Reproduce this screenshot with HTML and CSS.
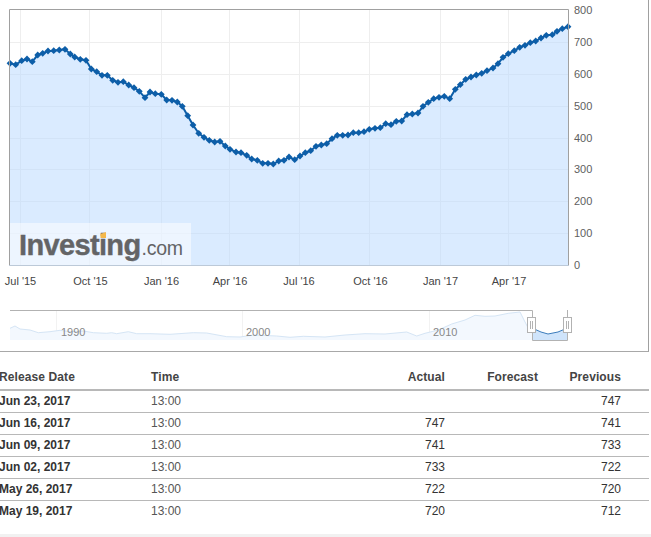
FILE: index.html
```html
<!DOCTYPE html>
<html lang="en">
<head>
<meta charset="utf-8">
<title>Release history chart</title>
<link rel="stylesheet" href="styles.css">
</head>
<body>
<div class="chart-box">
<svg class="chart" width="648" height="351" viewBox="0 0 648 351" xmlns="http://www.w3.org/2000/svg">
<defs>
<marker id="dot" markerUnits="userSpaceOnUse" markerWidth="8" markerHeight="8" refX="4" refY="4">
<path class="dot" d="M4 .6 7.400 4 4 7.400 .6 4Z"/>
</marker>
</defs>
<g class="grid">
<path d="M9.5 42.5H568.5M9.5 74.5H568.5M9.5 106.5H568.5M9.5 138.5H568.5M9.5 169.5H568.5M9.5 201.5H568.5M9.5 233.5H568.5"/>
<path d="M20.5 10V265M89.5 10V265M161.5 10V265M229.5 10V265M299.5 10V265M369.5 10V265M440.5 10V265M508.5 10V265"/>
</g>
<polygon class="area" points="10,63.3 15.7,64.7 21.7,60.7 27,59 32.3,61.7 37.7,55 42.7,53.3 48,51 53.7,50.7 59.3,50 65,49.3 70.3,54 74.7,57 80.3,59.3 86,60.3 91.3,69 96.7,71.7 102,75.3 107.3,75.3 112.7,80.3 118,82.3 123.3,81.7 128.7,85 134,87.7 139.3,91.3 145,97.7 150,92 155.3,93.7 161.3,94.3 166.7,100 172,100.3 177.3,102 182.3,106.3 187.7,115.7 193,125 198.7,133.3 204,137.3 209.3,140.3 214.7,142 220,141.3 225.3,146 230,149.3 236,152 241,152.7 246.7,155.3 251.7,159 257.3,160.3 262.7,163.3 268,163.3 273.3,164 278.7,161 284,160.3 289,157 294.7,159.7 300,156 305.3,152.7 310.7,150.7 316,146.3 321.3,145 326.7,143.7 332,138.7 337.3,135.3 342.7,135.3 348,135 353.3,132.7 358.7,132.7 364,131.7 369.3,129.3 375,128.3 380.3,127.7 385.7,123.7 391,124.7 396.3,121.3 401.7,121 407,114.7 412.3,114 418,113 423,106.3 428.3,102.3 433.7,98.7 439,97.3 444.3,96.3 449.7,98.7 455.3,89.3 460.3,84.7 465.7,79.3 471,77 476.3,75 481.7,73.3 487,70.7 493,68 498,63.7 503,57.3 508.3,53.7 514.3,50.7 519.7,47.3 525,45.3 530.3,42.7 535.7,41 541,38 546.3,35.3 552.3,34.7 557,31.3 562.3,28.7 568,26.7 568,265 10,265"/>
<polyline class="line" points="10,63.3 15.7,64.7 21.7,60.7 27,59 32.3,61.7 37.7,55 42.7,53.3 48,51 53.7,50.7 59.3,50 65,49.3 70.3,54 74.7,57 80.3,59.3 86,60.3 91.3,69 96.7,71.7 102,75.3 107.3,75.3 112.7,80.3 118,82.3 123.3,81.7 128.7,85 134,87.7 139.3,91.3 145,97.7 150,92 155.3,93.7 161.3,94.3 166.7,100 172,100.3 177.3,102 182.3,106.3 187.7,115.7 193,125 198.7,133.3 204,137.3 209.3,140.3 214.7,142 220,141.3 225.3,146 230,149.3 236,152 241,152.7 246.7,155.3 251.7,159 257.3,160.3 262.7,163.3 268,163.3 273.3,164 278.7,161 284,160.3 289,157 294.7,159.7 300,156 305.3,152.7 310.7,150.7 316,146.3 321.3,145 326.7,143.7 332,138.7 337.3,135.3 342.7,135.3 348,135 353.3,132.7 358.7,132.7 364,131.7 369.3,129.3 375,128.3 380.3,127.7 385.7,123.7 391,124.7 396.3,121.3 401.7,121 407,114.7 412.3,114 418,113 423,106.3 428.3,102.3 433.7,98.7 439,97.3 444.3,96.3 449.7,98.7 455.3,89.3 460.3,84.7 465.7,79.3 471,77 476.3,75 481.7,73.3 487,70.7 493,68 498,63.7 503,57.3 508.3,53.7 514.3,50.7 519.7,47.3 525,45.3 530.3,42.7 535.7,41 541,38 546.3,35.3 552.3,34.7 557,31.3 562.3,28.7 568,26.7"/>
<path class="frame" d="M9.5 265V9.5H568.5V265"/>
<path class="baseline" d="M9 265.5H569"/>
<rect class="logo-bg" x="10" y="223" width="181" height="42"/>
<text class="logo-main" x="19" y="254.500">Investing<tspan class="logo-com" dx="1">.com</tspan></text>
<path class="logo-dot" d="M100.500 234 106 232V238H100.500Z"/>
<g class="y-labels">
<text x="574" y="14">800</text><text x="574" y="46">700</text><text x="574" y="78">600</text><text x="574" y="110">500</text><text x="574" y="142">400</text><text x="574" y="173">300</text><text x="574" y="205">200</text><text x="574" y="237">100</text><text x="574" y="269">0</text>
</g>
<g class="x-labels">
<text x="20.500" y="285">Jul '15</text><text x="90.500" y="285">Oct '15</text><text x="161.500" y="285">Jan '16</text><text x="230" y="285">Apr '16</text><text x="299" y="285">Jul '16</text><text x="370.500" y="285">Oct '16</text><text x="440.500" y="285">Jan '17</text><text x="509" y="285">Apr '17</text>
</g>
<path class="nav-grid" d="M56.500 311V340M242.500 311V340M429.500 311V340"/>
<polygon class="nav-area" points="10,328.300 15,326 20,329 30,330 38.300,332.700 50,331.700 60,330.300 70,331.700 83.300,331 93.300,332.700 106.700,333.300 111.700,332.700 116.700,333.700 128.300,331.700 136.700,333.700 150,333.700 170,334.300 193.300,332.700 206.700,333 226.700,336.700 240,337 253.300,335 276.700,336 290,337.300 303.300,336.300 325,337 345,335 365,333.700 385,334 406.700,332 416.700,336 425,333.300 438.300,330 451.700,324 465,320 475,315.300 485,316.300 495,316 508.300,313.300 520,312 524,320 528.300,328.300 532,330 532,340 10,340"/>
<polyline class="nav-line" points="10,328.300 15,326 20,329 30,330 38.300,332.700 50,331.700 60,330.300 70,331.700 83.300,331 93.300,332.700 106.700,333.300 111.700,332.700 116.700,333.700 128.300,331.700 136.700,333.700 150,333.700 170,334.300 193.300,332.700 206.700,333 226.700,336.700 240,337 253.300,335 276.700,336 290,337.300 303.300,336.300 325,337 345,335 365,333.700 385,334 406.700,332 416.700,336 425,333.300 438.300,330 451.700,324 465,320 475,315.300 485,316.300 495,316 508.300,313.300 520,312 524,320 528.300,328.300 532,330"/>
<polygon class="sel-area" points="532,328 541,332 548,334 558,332 565,329 568,327 568,340 532,340"/>
<polyline class="sel-line" points="532,328 541,332 548,334 558,332 565,329 568,327"/>
<g class="nav-labels">
<text x="61" y="336">1990</text><text x="246" y="336">2000</text><text x="433" y="336">2010</text>
</g>
<path class="nav-frame" d="M10 310.500H532.500V340.500H567.500V310"/>
<g class="handle">
<rect x="527.500" y="317.500" width="8" height="15"/>
<path d="M530.500 321V329M532.500 321V329"/>
<rect x="563.500" y="317.500" width="8" height="15"/>
<path d="M566.500 321V329M568.500 321V329"/>
</g>
</svg>
</div>
<div class="table-wrap">
<table class="history">
<thead>
<tr><th class="date">Release Date</th><th class="time">Time</th><th class="num actual">Actual</th><th class="num forecast">Forecast</th><th class="num previous">Previous</th></tr>
</thead>
<tbody>
<tr><td class="date">Jun 23, 2017</td><td class="time">13:00</td><td class="num actual"></td><td class="num forecast"></td><td class="num previous">747</td></tr>
<tr><td class="date">Jun 16, 2017</td><td class="time">13:00</td><td class="num actual">747</td><td class="num forecast"></td><td class="num previous">741</td></tr>
<tr><td class="date">Jun 09, 2017</td><td class="time">13:00</td><td class="num actual">741</td><td class="num forecast"></td><td class="num previous">733</td></tr>
<tr><td class="date">Jun 02, 2017</td><td class="time">13:00</td><td class="num actual">733</td><td class="num forecast"></td><td class="num previous">722</td></tr>
<tr><td class="date">May 26, 2017</td><td class="time">13:00</td><td class="num actual">722</td><td class="num forecast"></td><td class="num previous">720</td></tr>
<tr><td class="date">May 19, 2017</td><td class="time">13:00</td><td class="num actual">720</td><td class="num forecast"></td><td class="num previous">712</td></tr>
</tbody>
</table>
</div>
<div class="footer-band"></div>
</body>
</html>
```
FILE: styles.css
```css
html, body {
  margin: 0;
  padding: 0;
  background: #fff;
  height: 537px;
  overflow: hidden;
  font-family: "Liberation Sans", Arial, sans-serif;
  color: #333;
}

.chart-box {
  width: 648px;
  height: 351px;
  border-right: 1px solid #a0a0a0;
  border-bottom: 1px solid #a8a8a8;
}

.chart {
  display: block;
  font-family: "Liberation Sans", Arial, sans-serif;
}

.grid path { fill: none; stroke: #eeeeee; stroke-width: 1; }
.area { fill: #b5d7ff; fill-opacity: .5; }
.line { fill: none; stroke: #0d5ea8; stroke-width: 2; stroke-linejoin: round; marker-start: url(#dot); marker-mid: url(#dot); marker-end: url(#dot); }
.dot { fill: #0d5ea8; }
.frame { fill: none; stroke: #a0a0a0; stroke-width: 1; }
.baseline { fill: none; stroke: #bcc9d8; stroke-width: 1; }
.logo-bg { fill: #fff; fill-opacity: .5; }
.logo-main { font-size: 29px; font-weight: 700; fill: #636466; stroke: #636466; stroke-width: .4px; letter-spacing: -.65px; }
.logo-com { font-size: 19.5px; font-weight: 400; stroke-width: 0; letter-spacing: -.2px; }
.logo-dot { fill: #f5b84a; }
.y-labels text { font-size: 11px; fill: #606060; }
.x-labels text { font-size: 11px; fill: #444; text-anchor: middle; }
.nav-grid { fill: none; stroke: #f2f2f2; stroke-width: 1; }
.nav-area { fill: #f3f8fe; }
.nav-line { fill: none; stroke: #d5e5f5; stroke-width: 1; }
.sel-area { fill: #cfe4fb; }
.sel-line { fill: none; stroke: #3b7cbc; stroke-width: 1; }
.nav-labels text { font-size: 11px; fill: #888; }
.nav-frame { fill: none; stroke: #b2b2b2; stroke-width: 1; }
.handle rect { fill: #fff; stroke: #b2b2b2; stroke-width: 1; }
.handle path { fill: none; stroke: #b2b2b2; stroke-width: 1; }

.table-wrap { padding-top: 13px; height: 169px; box-sizing: content-box; }

.history {
  width: 650px;
  margin-left: -1px;
  border-collapse: collapse;
  table-layout: fixed;
  font-size: 12px;
}

.history th {
  height: 24px;
  padding: 0;
  font-weight: 700;
  color: #444;
  text-align: left;
  letter-spacing: .1px;
  border-bottom: 2px solid #b8b8b8;
}

.history td {
  height: 19px;
  padding: 0 0 2px;
  border-bottom: 1px solid #b8b8b8;
}

.history tbody tr:last-child td { border-bottom: 0; }

.history .date { width: 152px; }
.history td.date { font-weight: 700; }
.history .time { width: 120px; }
.history td.time { color: #555; }
.history .num { text-align: right; }
.history .actual { width: 174px; }
.history .forecast { width: 93px; }
.history .previous { width: 83px; padding-right: 28px; }

.footer-band { height: 3px; background: #f1f1f1; }
```
